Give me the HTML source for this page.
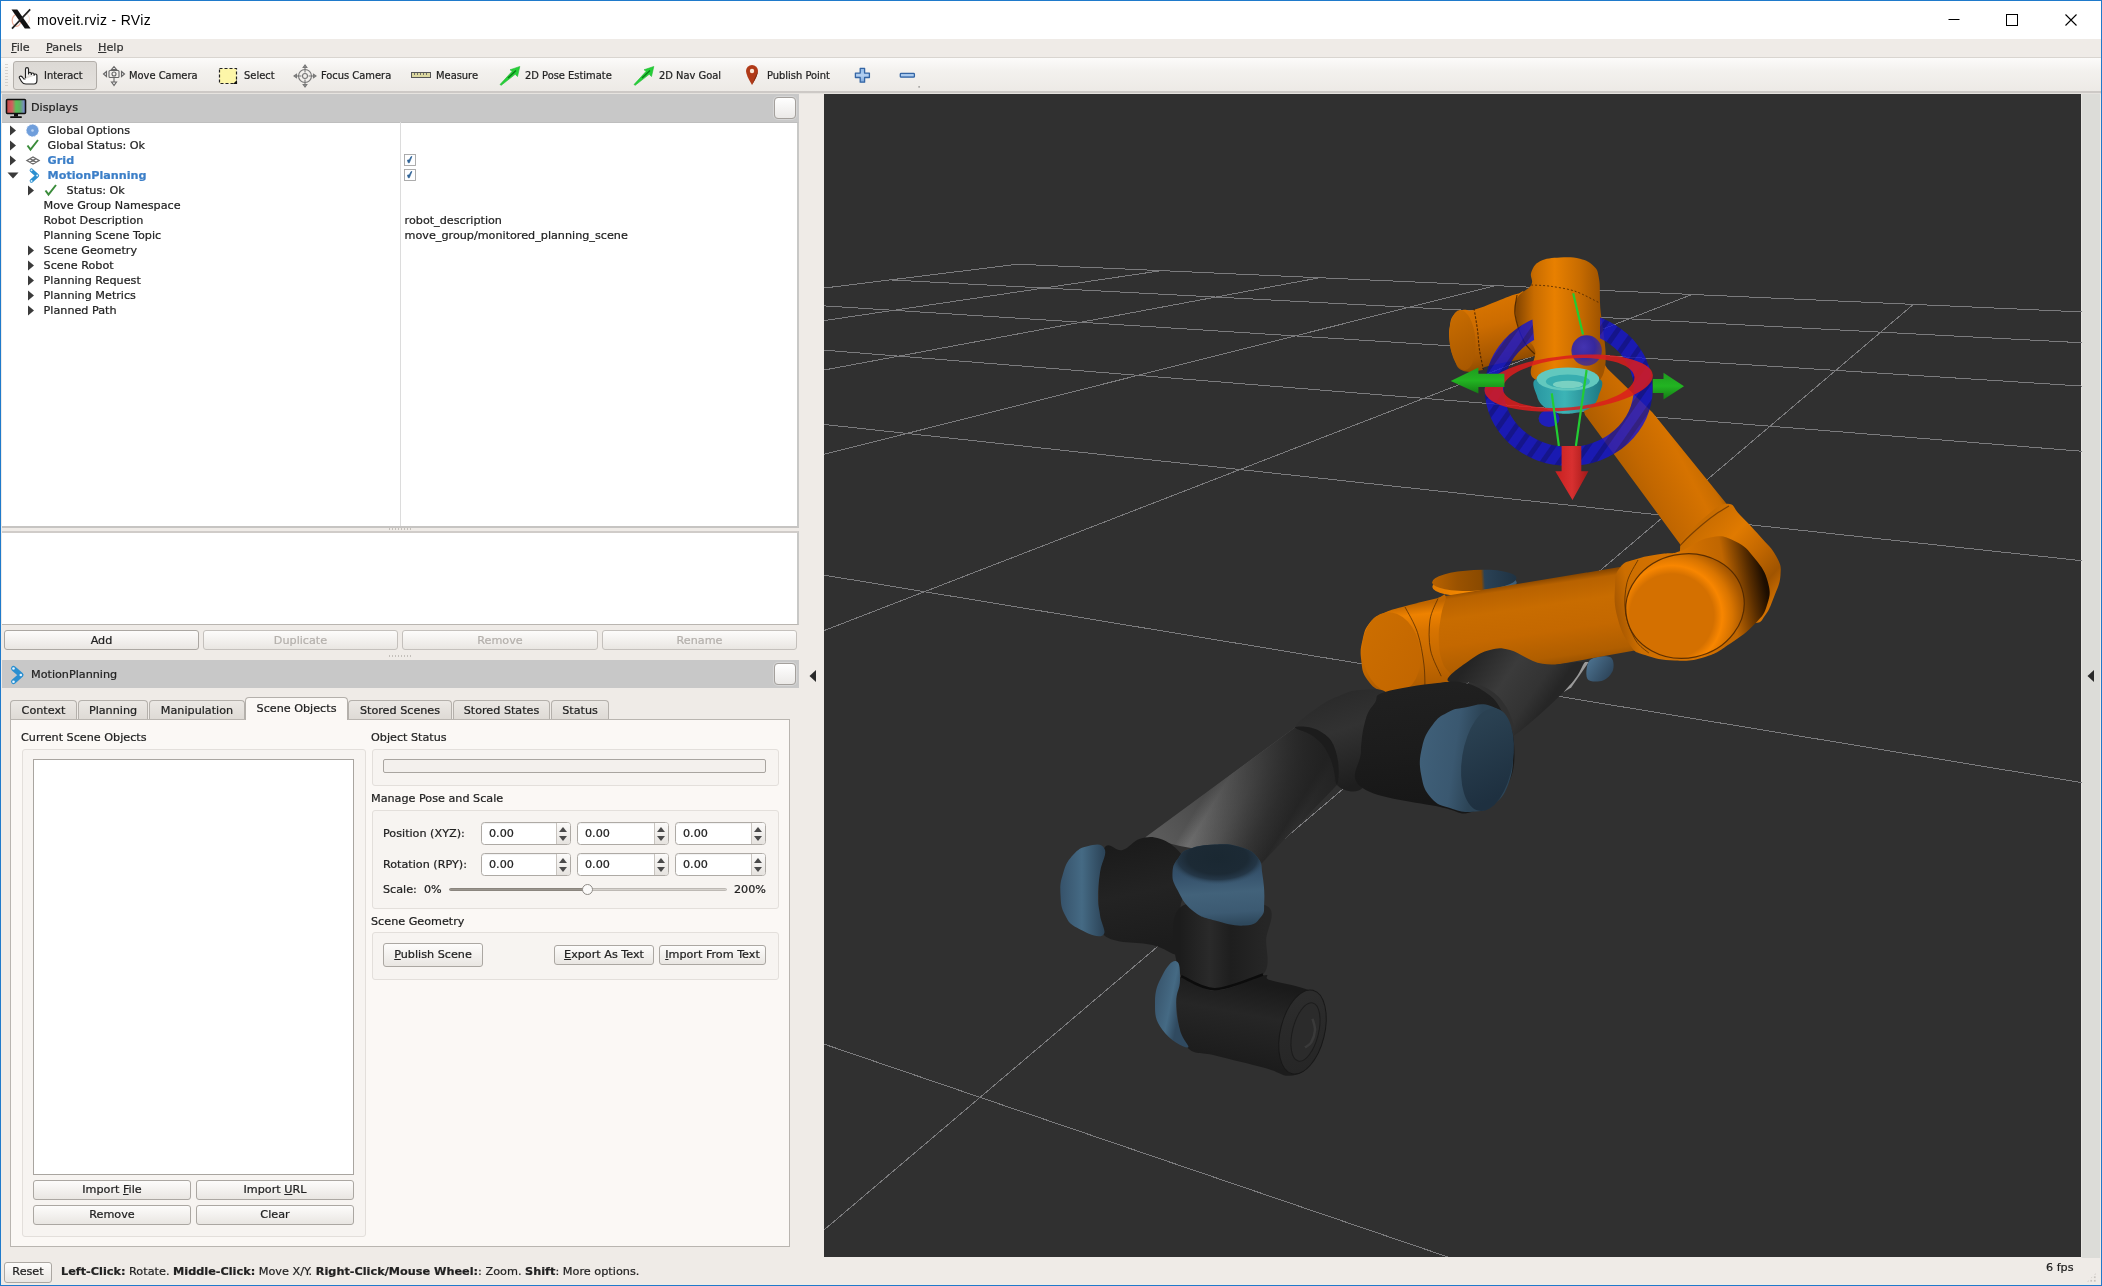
<!DOCTYPE html>
<html><head><meta charset="utf-8"><title>moveit.rviz - RViz</title>
<style>
html,body{margin:0;padding:0;}
body{width:2102px;height:1286px;overflow:hidden;background:#efebe7;font-family:"DejaVu Sans","Liberation Sans",sans-serif;font-size:11.2px;color:#222;-webkit-text-stroke-width:0.22px;position:relative;}
.abs{position:absolute;}
#win{position:absolute;left:0;top:0;width:2100px;height:1284px;border:1px solid #1f7acb;}
#title{position:absolute;left:1px;top:1px;width:2100px;height:38px;background:#fff;}
#title .t{position:absolute;left:36px;top:9.300px;font-family:"Liberation Sans",sans-serif;font-size:14px;letter-spacing:.31px;color:#000;line-height:20px;-webkit-text-stroke-width:0;}
#menu{position:absolute;left:1px;top:39px;width:2100px;height:19px;background:#efebe7;}
#menu span{position:absolute;top:1.800px;color:#333;line-height:14px;}
u{text-decoration:underline;text-underline-offset:1px;}
#tbar{position:absolute;left:1px;top:57px;width:2100px;background:linear-gradient(#fcfbfa,#f3f1ee 40%,#edeae6);border-top:1px solid #d9d5d0;border-bottom:2px solid #cdc9c6;height:36px;box-shadow:0 1px 0 #e6e3df;box-sizing:border-box;}
.tb{position:absolute;top:69px;font-family:"DejaVu Sans Condensed","DejaVu Sans",sans-serif;font-stretch:condensed;font-size:11px;line-height:13px;white-space:nowrap;}
.hdr{position:absolute;background:#c8c8c8;}
.hdr .lbl{position:absolute;left:29px;top:7px;line-height:13px;}
.fbtn{position:absolute;width:20px;height:20px;border:1px solid #a4a09c;border-radius:4px;background:linear-gradient(#fff,#ebe9e7);box-shadow:0 0 0 1px rgba(255,255,255,.25);}
.white{position:absolute;background:#fff;border:1px solid #b9b5b0;box-sizing:border-box;}
.row{position:absolute;left:0;height:15px;line-height:15px;white-space:nowrap;}
.btn{position:absolute;box-sizing:border-box;border:1px solid #aba7a2;border-radius:3px;background:linear-gradient(#fdfcfb,#e9e6e2);text-align:center;white-space:nowrap;}
.dis{color:#b4b0ac;border-color:#c4c0bc;}
.tab{position:absolute;box-sizing:border-box;border:1px solid #b4b0ab;border-bottom:none;border-radius:4px 4px 0 0;background:linear-gradient(#ebe8e4,#dedad5);text-align:center;white-space:nowrap;}
.grp{position:absolute;box-sizing:border-box;border:1px solid #e3dfdb;border-radius:3px;background:#f7f4f1;}
.spin{position:absolute;box-sizing:border-box;border:1px solid #aeaaa5;border-radius:3.500px;background:#fff;height:23px;box-shadow:inset 0 1px 1px rgba(0,0,0,.06);}
.spin span{position:absolute;left:7px;top:4px;line-height:13px;}

.cb{position:absolute;left:404px;width:11px;height:11px;box-sizing:border-box;border:1px solid #9aa4b0;border-radius:2px;background:#fff;}
.cb:after{content:"";position:absolute;left:3px;top:1px;width:2.5px;height:6px;background:#2a5aa0;transform:skewX(-20deg);}
.dots{position:absolute;width:22px;height:2px;background:repeating-linear-gradient(90deg,#c4c0bb 0 1px,transparent 1px 3px);}
.spin i{position:absolute;right:0;top:0;width:13px;height:21px;border-left:1px solid #c8c4bf;background:linear-gradient(#fbfaf9,#e6e3df);border-radius:0 2px 2px 0;}
.spin i:before{content:"";position:absolute;left:2px;top:4px;border:4.500px solid transparent;border-top:none;border-bottom:5px solid #4a4a4a;}
.spin i:after{content:"";position:absolute;left:2px;bottom:3.500px;border:4.500px solid transparent;border-bottom:none;border-top:5px solid #4a4a4a;}
</style></head><body><div id="root" style="position:absolute;left:0;top:0;width:2102px;height:1286px;will-change:transform;">
<div id="win"></div>
<div id="title"><span class="t">moveit.rviz - RViz</span></div>
<div id="menu"><span style="left:10px"><u>F</u>ile</span><span style="left:45px"><u>P</u>anels</span><span style="left:97px"><u>H</u>elp</span></div>
<div id="tbar"></div>
<!--TOOLBAR-->
<!-- title icon -->
<svg class="abs" style="left:9px;top:7px" width="24" height="24" viewBox="9 7 24 24">
 <ellipse cx="16.5" cy="20.500" rx="4.300" ry="5.800" fill="none" stroke="#e9967a" stroke-width="1.200" opacity=".75"/>
 <ellipse cx="26" cy="19" rx="3.500" ry="4.800" fill="none" stroke="#f0c8b0" stroke-width="1" opacity=".6"/>
 <path d="M11.5 9.5 L17.3 9.5 L30.6 28.5 L24.8 28.5 Z" fill="#111"/>
 <path d="M30.200 9.300 L12 28.600" stroke="#222" stroke-width="1.700"/>
</svg>
<!-- window controls -->
<svg class="abs" style="left:1940px;top:8px" width="150" height="24" viewBox="1940 8 150 24">
 <path d="M1948.5 19.5h11" stroke="#000" stroke-width="1"/>
 <rect x="2006.5" y="14.5" width="11" height="11" fill="none" stroke="#000" stroke-width="1"/>
 <path d="M2065.5 14.5l11 11M2076.5 14.5l-11 11" stroke="#000" stroke-width="1.1"/>
</svg>
<!-- toolbar -->
<div class="abs" style="left:5px;top:64px;width:3px;height:22px;background:repeating-linear-gradient(180deg,#c8c4bf 0 1px,transparent 1px 3px);opacity:.7"></div>
<div class="abs" style="left:13px;top:61px;width:84px;height:29px;box-sizing:border-box;border:1px solid #b4b0ab;border-radius:3px;background:linear-gradient(#dcd9d5,#e4e1dd);"></div>
<svg class="abs" style="left:17px;top:64px" width="24" height="24" viewBox="0 0 24 24">
 <path d="M8.5 14 V5.2 a1.5 1.5 0 0 1 3 0 V10.5 M11.5 10.5 V9.7 a1.4 1.4 0 0 1 2.8 0 V11 M14.3 11 V10.4 a1.4 1.4 0 0 1 2.8 0 V11.8 M17.1 11.8 V11.4 a1.4 1.4 0 0 1 2.8 0 V16.5 q0 3.5 -3 3.5 H9 q-3 0 -4.5 -2.5 L2.5 14 q-.6 -1.3 .6 -1.8 q1.2 -.4 2.2 .8 L6.8 15 H8.5" fill="#fff" stroke="#222" stroke-width="1.2" stroke-linejoin="round"/>
</svg>
<span class="tb" style="left:44px">Interact</span>
<svg class="abs" style="left:102px;top:64px" width="24" height="24" viewBox="0 0 24 24" fill="none" stroke="#666" stroke-width="1.1">
 <rect x="7" y="6.5" width="10" height="7" rx="1"/><circle cx="12" cy="10" r="2"/>
 <path d="M12 2.5l-2.5 3h5zM12 21.5l-2.5-3.5h5zM1.5 10l3-2.5v5zM22.5 10l-3-2.5v5z" fill="#eee"/><path d="M12 14v4"/>
</svg>
<span class="tb" style="left:129px">Move Camera</span>
<svg class="abs" style="left:216px;top:64px" width="24" height="24" viewBox="0 0 24 24">
 <rect x="3.5" y="4.500" width="17" height="15" fill="#fdf6a8" stroke="#222" stroke-width="1.2" stroke-dasharray="3 2"/>
 <path d="M21 20 L21 16 L17 20Z" fill="#111"/>
</svg>
<span class="tb" style="left:244px">Select</span>
<svg class="abs" style="left:293px;top:64px" width="24" height="24" viewBox="0 0 24 24" fill="none" stroke="#777" stroke-width="1.1">
 <circle cx="12" cy="12" r="6.5"/><circle cx="12" cy="12" r="2.5"/>
 <path d="M12 1.5v7M12 15.5v7M1.500 12h7M15.5 12h7"/>
 <path d="M12 1l-1.800 2.500h3.600zM12 23l-1.800-2.500h3.600zM1 12l2.500-1.800v3.600zM23 12l-2.500-1.800v3.600z" fill="#999"/>
</svg>
<span class="tb" style="left:321px">Focus Camera</span>
<svg class="abs" style="left:410px;top:64px" width="24" height="24" viewBox="0 0 24 24">
 <rect x="1.5" y="8.500" width="19" height="5" fill="#dcd8a0" stroke="#555" stroke-width="1"/>
 <path d="M4.500 8.500v2.500M7.500 8.500v2.500M10.500 8.500v2.500M13.500 8.500v2.500M16.500 8.500v2.500" stroke="#555" stroke-width=".8"/>
</svg>
<span class="tb" style="left:436px">Measure</span>
<svg class="abs" style="left:498px;top:64px" width="24" height="24" viewBox="0 0 24 24">
 <path d="M2 20.500 L14.200 7.300 L12 5.800 L21.800 2.500 L19.500 12.500 L17.200 10.300 L3.200 21.300 Z" fill="#25d038" stroke="#1fb82f" stroke-width=".6" stroke-linejoin="round"/>
 <path d="M10 14 L18 6.500" stroke="#0a7a18" stroke-width="1.300"/>
</svg>
<span class="tb" style="left:525px">2D Pose Estimate</span>
<svg class="abs" style="left:632px;top:64px" width="24" height="24" viewBox="0 0 24 24">
 <path d="M2 20.500 L14.200 7.300 L12 5.800 L21.800 2.500 L19.500 12.500 L17.200 10.300 L3.200 21.300 Z" fill="#25d038" stroke="#1fb82f" stroke-width=".6" stroke-linejoin="round"/>
 <path d="M10 14 L18 6.500" stroke="#0a7a18" stroke-width="1.300"/>
</svg>
<span class="tb" style="left:659px">2D Nav Goal</span>
<svg class="abs" style="left:741px;top:63px" width="24" height="24" viewBox="0 0 24 24">
 <path d="M11 22 Q5 12 5 8 A6 6 0 0 1 17 8 Q17 12 11 22Z" fill="#b03a18"/><path d="M11 22 Q14 14 17 8 Q17 12 11 22Z" fill="#7a2a10"/>
 <circle cx="11" cy="8" r="2.200" fill="#f8e8d8"/>
</svg>
<span class="tb" style="left:767px">Publish Point</span>
<svg class="abs" style="left:850px;top:64px" width="72" height="24" viewBox="850 64 72 24">
 <defs><linearGradient id="pm" x1="0" x2="0" y1="0" y2="1"><stop offset="0" stop-color="#8db8e8"/><stop offset=".5" stop-color="#b4d0f0"/><stop offset="1" stop-color="#7aa6dc"/></linearGradient></defs>
 <path d="M860.2 68.4h4.400v4.700h4.800v4.400h-4.800v4.700h-4.400v-4.700h-4.800v-4.400h4.800z" fill="url(#pm)" stroke="#3465a4" stroke-width="1.300" stroke-linejoin="round"/>
 <rect x="900.300" y="73.400" width="14.100" height="3.800" rx=".8" fill="url(#pm)" stroke="#3465a4" stroke-width="1.300"/>
 <rect x="918.500" y="86.300" width="1.200" height="1.200" fill="#666"/>
</svg>
<!--LEFT-->
<!-- Displays header -->
<div class="hdr" style="left:2px;top:94px;width:797px;height:28px;"><span class="lbl">Displays</span></div>
<svg class="abs" style="left:5px;top:98px" width="24" height="24" viewBox="0 0 24 24">
 <defs><linearGradient id="mon" x1="0" x2="1" y1="0" y2="0"><stop offset="0" stop-color="#c84848"/><stop offset=".3" stop-color="#d06060"/><stop offset=".5" stop-color="#58c058"/><stop offset=".7" stop-color="#60b060"/><stop offset="1" stop-color="#8080e8"/></linearGradient></defs>
 <rect x="1.5" y="1.5" width="19" height="14" rx="1" fill="url(#mon)" stroke="#111" stroke-width="1.6"/>
 <rect x="9" y="16" width="4" height="2.5" fill="#111"/><rect x="5" y="18.2" width="12" height="1.8" rx=".9" fill="#111"/>
</svg>
<div class="fbtn" style="left:774px;top:97px"></div>
<!-- tree -->
<div class="white" style="left:2px;top:122px;width:797px;height:406px;border-top:1px solid #bebebe;border-left:none;border-bottom:2px solid #c6c4c2;border-right:2px solid #c8c8c6"></div>
<div class="abs" style="left:400px;top:122px;width:1px;height:404px;background:#dcdcdc;"></div>
<div id="tree" class="abs" style="left:.6px;top:122.550px;width:798px;height:404px;">
 <svg class="abs" style="left:0;top:0" width="60" height="200" viewBox="0 0 60 200">
  <g fill="#3a3a3a">
   <path d="M9 2.5 L15 7.5 L9 12.5Z"/><path d="M9 17.5 L15 22.5 L9 27.5Z"/><path d="M9 32.5 L15 37.5 L9 42.5Z"/>
   <path d="M6.5 49.5 L17.5 49.5 L12 55.5Z"/>
   <path d="M27 62.5 L33 67.5 L27 72.5Z"/>
   <path d="M27 122.5 L33 127.5 L27 132.5Z"/><path d="M27 137.5 L33 142.5 L27 147.5Z"/><path d="M27 152.5 L33 157.5 L27 162.5Z"/><path d="M27 167.5 L33 172.5 L27 177.5Z"/><path d="M27 182.5 L33 187.5 L27 192.5Z"/>
  </g>
  <!-- global options icon -->
  <circle cx="31.5" cy="7.5" r="6" fill="#6f9edb"/><circle cx="31.5" cy="7.5" r="6" fill="none" stroke="#9fc0ea" stroke-width="1" stroke-dasharray="1.5 1.5"/><circle cx="31.5" cy="7.5" r="1.3" fill="#b8d2f2"/>
  <!-- checks -->
  <path d="M26.5 22.5 L29.5 26.5 L37 17" fill="none" stroke="#3b8c3b" stroke-width="2"/>
  <path d="M44.5 67.5 L47.5 71.5 L55 62" fill="none" stroke="#3b8c3b" stroke-width="2"/>
  <!-- grid icon -->
  <path d="M26 37.5 L32 34 L38 37.5 L32 41Z M29 35.7 L35 39.3 M35 35.7 L29 39.3" fill="none" stroke="#6a6a6a" stroke-width="1.400"/>
  <!-- MP icon -->
  <path d="M30.5 47.3 L36.3 52.6 L30.5 57.900" fill="none" stroke="#2a8fd0" stroke-width="3.700" stroke-linejoin="round" stroke-linecap="round"/>
  <circle cx="30.5" cy="47.3" r="1" fill="#d8f0ff"/><circle cx="36.2" cy="52.6" r="1" fill="#d8f0ff"/><circle cx="30.5" cy="57.900" r="1" fill="#d8f0ff"/>
 </svg>
 <div class="row" style="top:0;left:47px">Global Options</div>
 <div class="row" style="top:15px;left:47px">Global Status: Ok</div>
 <div class="row" style="top:30px;left:47px;font-weight:bold;color:#3c7fc8">Grid</div>
 <div class="row" style="top:45px;left:47px;font-weight:bold;color:#3c7fc8">MotionPlanning</div>
 <div class="row" style="top:60px;left:66px">Status: Ok</div>
 <div class="row" style="top:75px;left:43px">Move Group Namespace</div>
 <div class="row" style="top:90px;left:43px">Robot Description</div>
 <div class="row" style="top:105px;left:43px">Planning Scene Topic</div>
 <div class="row" style="top:120px;left:43px">Scene Geometry</div>
 <div class="row" style="top:135px;left:43px">Scene Robot</div>
 <div class="row" style="top:150px;left:43px">Planning Request</div>
 <div class="row" style="top:165px;left:43px">Planning Metrics</div>
 <div class="row" style="top:180px;left:43px">Planned Path</div>
 <div class="row" style="top:90px;left:404px">robot_description</div>
 <div class="row" style="top:105px;left:404px">move_group/monitored_planning_scene</div>
 <svg class="abs" style="left:403.800px;top:31.600px" width="12" height="12" viewBox="0 0 12 12"><rect x=".5" y=".5" width="11" height="11" fill="#fdfeff" stroke="#a4a4a4" stroke-width=".9"/><path d="M3.400 6.200 L4.300 8.800 L5.300 8.800 L7.900 2.600 L7.100 2.500 L5.300 5.800 Z" fill="#2f6396" stroke="#2f6396" stroke-width=".7" stroke-linejoin="round"/></svg><svg class="abs" style="left:403.800px;top:46.600px" width="12" height="12" viewBox="0 0 12 12"><rect x=".5" y=".5" width="11" height="11" fill="#fdfeff" stroke="#a4a4a4" stroke-width=".9"/><path d="M3.400 6.200 L4.300 8.800 L5.300 8.800 L7.900 2.600 L7.100 2.500 L5.300 5.800 Z" fill="#2f6396" stroke="#2f6396" stroke-width=".7" stroke-linejoin="round"/></svg>
</div>
<!-- splitter dots -->
<div class="dots" style="left:389px;top:528px"></div>
<div class="white" style="left:2px;top:531px;width:797px;height:94px;border-left:none;border-top:2px solid #d0ccc9;border-right:2px solid #c8c8c6"></div>
<div class="btn" style="left:4px;top:630px;width:195px;height:20px;line-height:19px">Add</div>
<div class="btn dis" style="left:203px;top:630px;width:195px;height:20px;line-height:19px">Duplicate</div>
<div class="btn dis" style="left:402px;top:630px;width:196px;height:20px;line-height:19px">Remove</div>
<div class="btn dis" style="left:602px;top:630px;width:195px;height:20px;line-height:19px">Rename</div>
<div class="dots" style="left:389px;top:655px"></div>
<!-- MotionPlanning panel -->
<div class="hdr" style="left:2px;top:660px;width:797px;height:28px;"><span class="lbl" style="top:8px">MotionPlanning</span></div>
<svg class="abs" style="left:8px;top:664px" width="18" height="22" viewBox="0 0 18 22">
 <path d="M5.500 4.500 L13 11 L5.500 17.700" fill="none" stroke="#2a8fd0" stroke-width="5" stroke-linejoin="round" stroke-linecap="round"/>
 <circle cx="5.500" cy="4.500" r="1.300" fill="#e4f4ff"/><circle cx="12.800" cy="11" r="1.300" fill="#e4f4ff"/><circle cx="5.500" cy="17.700" r="1.300" fill="#e4f4ff"/>
</svg>
<div class="fbtn" style="left:774px;top:663px"></div>
<!-- tab pane -->
<div class="abs" style="left:10px;top:719px;width:780px;height:528px;box-sizing:border-box;border:1px solid #b9b5b0;background:#fbf8f5;"></div>
<div class="tab" style="left:10px;top:700px;width:67px;height:19px;line-height:19px">Context</div>
<div class="tab" style="left:78px;top:700px;width:70px;height:19px;line-height:19px">Planning</div>
<div class="tab" style="left:149px;top:700px;width:96px;height:19px;line-height:19px">Manipulation</div>
<div class="tab" style="left:348px;top:700px;width:104px;height:19px;line-height:19px">Stored Scenes</div>
<div class="tab" style="left:453px;top:700px;width:97px;height:19px;line-height:19px">Stored States</div>
<div class="tab" style="left:551px;top:700px;width:58px;height:19px;line-height:19px">Status</div>
<div class="tab" style="left:245px;top:697px;width:103px;height:23px;line-height:22px;background:#fbf8f5;">Scene Objects</div>
<!-- left group -->
<div class="abs" style="left:21px;top:731px;line-height:14px">Current Scene Objects</div>
<div class="grp" style="left:22px;top:749px;width:344px;height:488px"></div>
<div class="white" style="left:33px;top:759px;width:321px;height:416px;border-color:#a9a5a0"></div>
<div class="btn" style="left:33px;top:1180px;width:158px;height:20px;line-height:18px">Import <u>F</u>ile</div>
<div class="btn" style="left:196px;top:1180px;width:158px;height:20px;line-height:18px">Import <u>U</u>RL</div>
<div class="btn" style="left:33px;top:1205px;width:158px;height:20px;line-height:18px">Remove</div>
<div class="btn" style="left:196px;top:1205px;width:158px;height:20px;line-height:18px">Clear</div>
<!-- right groups -->
<div class="abs" style="left:371px;top:731px;line-height:14px">Object Status</div>
<div class="grp" style="left:372px;top:749px;width:407px;height:37px"></div>
<div class="abs" style="left:383px;top:759px;width:383px;height:14px;box-sizing:border-box;border:1px solid #a9a5a0;border-radius:2px;background:#f3f0ed"></div>
<div class="abs" style="left:371px;top:792px;line-height:14px">Manage Pose and Scale</div>
<div class="grp" style="left:372px;top:810px;width:407px;height:99px"></div>
<div class="abs" style="left:383px;top:827px;line-height:14px">Position (XYZ):</div>
<div class="abs" style="left:383px;top:858px;line-height:14px">Rotation (RPY):</div>
<div class="abs" style="left:383px;top:883px;line-height:14px">Scale:&nbsp; 0%</div>
<div class="abs" style="left:734px;top:883px;line-height:14px">200%</div>
<div class="spin" style="left:481px;top:822px;width:90px"><span>0.00</span><i></i></div>
<div class="spin" style="left:577px;top:822px;width:92px"><span>0.00</span><i></i></div>
<div class="spin" style="left:675px;top:822px;width:91px"><span>0.00</span><i></i></div>
<div class="spin" style="left:481px;top:853px;width:90px"><span>0.00</span><i></i></div>
<div class="spin" style="left:577px;top:853px;width:92px"><span>0.00</span><i></i></div>
<div class="spin" style="left:675px;top:853px;width:91px"><span>0.00</span><i></i></div>
<div class="abs" style="left:449px;top:888px;width:139px;height:3px;border-radius:2px;background:#9a958e;border:1px solid #8a857e;box-sizing:border-box"></div>
<div class="abs" style="left:588px;top:888px;width:139px;height:3px;border-radius:2px;background:#d6d2cd;border:1px solid #bdb9b4;box-sizing:border-box"></div>
<div class="abs" style="left:582px;top:884px;width:11px;height:11px;border-radius:6px;box-sizing:border-box;border:1px solid #8f8b86;background:#fbfaf9"></div>
<div class="abs" style="left:371px;top:915px;line-height:14px">Scene Geometry</div>
<div class="grp" style="left:372px;top:932px;width:407px;height:48px"></div>
<div class="btn" style="left:383px;top:943px;width:100px;height:24px;line-height:22px"><u>P</u>ublish Scene</div>
<div class="btn" style="left:554px;top:945px;width:100px;height:20px;line-height:18px"><u>E</u>xport As Text</div>
<div class="btn" style="left:659px;top:945px;width:107px;height:20px;line-height:18px"><u>I</u>mport From Text</div>
<!--VIEW-->
<div class="abs" style="left:2081px;top:94px;width:19px;height:1164px;background:#dcdcd8;border-left:1px solid #e8e6e2;box-sizing:border-box"></div>
<svg class="abs" style="left:824px;top:94px" width="1257.5" height="1163" viewBox="824 94 1257.5 1163">
<rect x="823" y="94" width="1258" height="1163" fill="#303030"/>
<path d="M1017.9 264.2L-25439.2 3518.4M1017.9 264.2L3627.4 381.3M1161.1 270.7L-20714.7 3509.4M890.2 279.9L4001.2 444.0M1319.4 277.8L-15990.2 3500.4M728.9 299.8L4621.8 548.0M1495.3 285.6L-11265.7 3491.5M519.0 325.6L5853.5 754.5M1692.0 294.5L-6541.2 3482.5M234.5 360.6L9474.8 1361.6M1913.4 304.4L-1816.7 3473.5M-172.9 410.7L18166.0 3435.6M2164.4 315.7L2907.8 3464.6M-804.8 488.4L7890.8 3455.1M2451.5 328.5L7632.3 3455.6M-1917.4 625.3L-2384.4 3474.6M2782.9 343.4L12356.8 3446.7M-4396.2 930.1L-12659.6 3494.1M3169.7 360.8L17081.3 3437.7M-14758.1 2204.6L-22934.8 3513.6M3627.4 381.3L21805.8 3428.7" fill="none" stroke="#7b7b7d" stroke-width="1" shape-rendering="crispEdges"/>
<defs><linearGradient id="g1" gradientUnits="userSpaceOnUse" x1="1470.0" y1="660.0" x2="1542.5" y2="710.0"><stop offset="0" stop-color="#242424"/><stop offset="0.45" stop-color="#3b3b3b"/><stop offset="0.8" stop-color="#333333"/><stop offset="1" stop-color="#262626"/></linearGradient><linearGradient id="g2" gradientUnits="userSpaceOnUse" x1="1590.0" y1="660.0" x2="1612.5" y2="675.0"><stop offset="0" stop-color="#4a6f8c"/><stop offset="1" stop-color="#2c4358"/></linearGradient><linearGradient id="discside" gradientUnits="userSpaceOnUse" x1="1432" y1="0" x2="1517" y2="0"><stop offset="0" stop-color="#e07a00"/><stop offset=".35" stop-color="#f48800"/><stop offset=".61" stop-color="#f08400"/><stop offset=".63" stop-color="#5a88aa"/><stop offset="1" stop-color="#3a5a74"/></linearGradient><linearGradient id="disctop" gradientUnits="userSpaceOnUse" x1="1432" y1="0" x2="1517" y2="0"><stop offset="0" stop-color="#b86200"/><stop offset=".3" stop-color="#9a5200"/><stop offset=".58" stop-color="#8a4a00"/><stop offset=".62" stop-color="#2a4256"/><stop offset="1" stop-color="#1f3242"/></linearGradient><linearGradient id="g3" gradientUnits="userSpaceOnUse" x1="1600.0" y1="490.0" x2="1695.0" y2="440.0"><stop offset="0" stop-color="#6e3a00"/><stop offset="0.12" stop-color="#a85a00"/><stop offset="0.45" stop-color="#c26700"/><stop offset="0.8" stop-color="#d67300"/><stop offset="0.94" stop-color="#c86c00"/><stop offset="1" stop-color="#a85a00"/></linearGradient><linearGradient id="g4" gradientUnits="userSpaceOnUse" x1="1530.0" y1="581.2" x2="1542.5" y2="667.5"><stop offset="0" stop-color="#8a4800"/><stop offset="0.07" stop-color="#b86200"/><stop offset="0.3" stop-color="#c86c00"/><stop offset="0.6" stop-color="#c46800"/><stop offset="0.9" stop-color="#b05e00"/><stop offset="1" stop-color="#9a5200"/></linearGradient><linearGradient id="g5" gradientUnits="userSpaceOnUse" x1="1405.0" y1="605.0" x2="1415.0" y2="695.0"><stop offset="0" stop-color="#c06600"/><stop offset="0.12" stop-color="#ee8200"/><stop offset="0.3" stop-color="#d87400"/><stop offset="0.7" stop-color="#c06600"/><stop offset="1" stop-color="#a85800"/></linearGradient><linearGradient id="g6" gradientUnits="userSpaceOnUse" x1="1362.5" y1="625.0" x2="1422.5" y2="680.0"><stop offset="0" stop-color="#cc6e00"/><stop offset="1" stop-color="#c26600"/></linearGradient><linearGradient id="g7" gradientUnits="userSpaceOnUse" x1="1692.5" y1="532.5" x2="1775.0" y2="605.0"><stop offset="0" stop-color="#c86c00"/><stop offset="0.3" stop-color="#e07a00"/><stop offset="0.55" stop-color="#c46800"/><stop offset="0.8" stop-color="#a05400"/><stop offset="1" stop-color="#d87400"/></linearGradient><linearGradient id="g8" gradientUnits="userSpaceOnUse" x1="1615.0" y1="605.0" x2="1771.2" y2="575.0"><stop offset="0" stop-color="#a85800"/><stop offset="0.1" stop-color="#cc6e00"/><stop offset="0.45" stop-color="#d87400"/><stop offset="0.72" stop-color="#c06600"/><stop offset="0.86" stop-color="#5a2e00"/><stop offset="0.95" stop-color="#1e0e00"/><stop offset="1" stop-color="#140800"/></linearGradient><radialGradient id="g9" gradientUnits="userSpaceOnUse" cx="1670.0" cy="613.0" r="84.0"><stop offset="0" stop-color="#d47000"/><stop offset="0.5" stop-color="#d47000"/><stop offset="0.6" stop-color="#f88600"/><stop offset="0.72" stop-color="#d87400"/><stop offset="0.85" stop-color="#a85800"/><stop offset="1" stop-color="#8a4600"/></radialGradient><linearGradient id="g10" gradientUnits="userSpaceOnUse" x1="1482.5" y1="302.5" x2="1500.0" y2="367.5"><stop offset="0" stop-color="#d87400"/><stop offset="0.35" stop-color="#cc6c00"/><stop offset="0.8" stop-color="#a85800"/><stop offset="1" stop-color="#8a4800"/></linearGradient><linearGradient id="g11" gradientUnits="userSpaceOnUse" x1="1450.0" y1="315.0" x2="1475.0" y2="365.0"><stop offset="0" stop-color="#c86c00"/><stop offset="1" stop-color="#a85800"/></linearGradient><linearGradient id="g12" gradientUnits="userSpaceOnUse" x1="1517.5" y1="240.0" x2="1600.0" y2="240.0"><stop offset="0" stop-color="#8a4800"/><stop offset="0.2" stop-color="#c86c00"/><stop offset="0.45" stop-color="#e88000"/><stop offset="0.75" stop-color="#c86c00"/><stop offset="1" stop-color="#a05400"/></linearGradient><linearGradient id="g13" gradientUnits="userSpaceOnUse" x1="1536.0" y1="0.0" x2="1600.0" y2="0.0"><stop offset="0" stop-color="#2a98a2"/><stop offset="0.45" stop-color="#3cb4b6"/><stop offset="1" stop-color="#1f7c86"/></linearGradient><linearGradient id="g14" gradientUnits="userSpaceOnUse" x1="1215.0" y1="778.0" x2="1300.0" y2="830.0"><stop offset="0" stop-color="#5a5a5a"/><stop offset="0.12" stop-color="#747474"/><stop offset="0.35" stop-color="#606060"/><stop offset="0.65" stop-color="#3c3c3c"/><stop offset="0.85" stop-color="#2a2a2a"/><stop offset="0.94" stop-color="#3a3a3a"/><stop offset="1" stop-color="#383838"/></linearGradient><linearGradient id="g15" gradientUnits="userSpaceOnUse" x1="1170.0" y1="850.0" x2="1320.0" y2="740.0"><stop offset="0" stop-color="rgba(30,30,30,0)"/><stop offset="0.5" stop-color="rgba(34,34,34,.45)"/><stop offset="1" stop-color="rgba(32,32,32,.9)"/></linearGradient><linearGradient id="g16" gradientUnits="userSpaceOnUse" x1="1325.0" y1="695.0" x2="1355.0" y2="785.0"><stop offset="0" stop-color="#2a2a2a"/><stop offset="0.4" stop-color="#323232"/><stop offset="1" stop-color="#1e1e1e"/></linearGradient><linearGradient id="g17" gradientUnits="userSpaceOnUse" x1="1400.0" y1="690.0" x2="1412.5" y2="802.5"><stop offset="0" stop-color="#202020"/><stop offset="0.5" stop-color="#1c1c1c"/><stop offset="1" stop-color="#171717"/></linearGradient><linearGradient id="g18" gradientUnits="userSpaceOnUse" x1="1422.5" y1="752.5" x2="1475.0" y2="760.0"><stop offset="0" stop-color="#3f5f78"/><stop offset="0.6" stop-color="#3a5870"/><stop offset="1" stop-color="#2c4456"/></linearGradient><linearGradient id="g19" gradientUnits="userSpaceOnUse" x1="1465.0" y1="727.5" x2="1510.0" y2="790.0"><stop offset="0" stop-color="#2a4152"/><stop offset="1" stop-color="#1e3040"/></linearGradient><linearGradient id="g20" gradientUnits="userSpaceOnUse" x1="1115.0" y1="840.0" x2="1140.0" y2="950.0"><stop offset="0" stop-color="#1a1a1a"/><stop offset="0.5" stop-color="#232323"/><stop offset="1" stop-color="#1c1c1c"/></linearGradient><linearGradient id="g21" gradientUnits="userSpaceOnUse" x1="1060.0" y1="890.0" x2="1103.8" y2="890.0"><stop offset="0" stop-color="#36526a"/><stop offset="0.5" stop-color="#456a84"/><stop offset="1" stop-color="#2c4458"/></linearGradient><linearGradient id="g22" gradientUnits="userSpaceOnUse" x1="1180.0" y1="790.0" x2="1265.0" y2="790.0"><stop offset="0" stop-color="#1c1c1c"/><stop offset="0.35" stop-color="#2a2a2a"/><stop offset="0.6" stop-color="#1e1e1e"/><stop offset="1" stop-color="#262626"/></linearGradient><linearGradient id="g23" gradientUnits="userSpaceOnUse" x1="1240.0" y1="980.0" x2="1225.0" y2="1060.0"><stop offset="0" stop-color="#1a1a1a"/><stop offset="0.4" stop-color="#262626"/><stop offset="1" stop-color="#1c1c1c"/></linearGradient><linearGradient id="g24" gradientUnits="userSpaceOnUse" x1="1285.0" y1="1002.5" x2="1320.0" y2="1065.0"><stop offset="0" stop-color="#2c2c2c"/><stop offset="1" stop-color="#262626"/></linearGradient><linearGradient id="g25" gradientUnits="userSpaceOnUse" x1="1155.0" y1="1002.5" x2="1180.0" y2="1007.5"><stop offset="0" stop-color="#3a5870"/><stop offset="0.6" stop-color="#456a84"/><stop offset="1" stop-color="#304a60"/></linearGradient><linearGradient id="g26" gradientUnits="userSpaceOnUse" x1="1215.0" y1="845.0" x2="1220.0" y2="925.0"><stop offset="0" stop-color="#2a4052"/><stop offset="0.35" stop-color="#34506a"/><stop offset="0.6" stop-color="#42627a"/><stop offset="0.85" stop-color="#3c5a72"/><stop offset="1" stop-color="#2e485c"/></linearGradient><clipPath id="capC"><path d="M1190.0 848.8C1198.5 845.7 1203.3 844.9 1215.0 844.5C1226.7 844.1 1230.1 844.0 1240.0 847.0C1249.9 850.0 1252.2 851.0 1257.5 857.5C1262.8 864.0 1260.9 864.5 1262.5 875.0C1264.1 885.5 1264.7 892.6 1264.2 902.5C1263.8 912.4 1265.0 912.1 1260.5 917.5C1256.0 922.9 1255.6 924.8 1245.0 925.5C1234.4 926.2 1227.2 924.0 1215.0 920.5C1202.8 917.0 1201.2 917.6 1192.5 910.5C1183.8 903.4 1182.2 898.9 1177.5 890.0C1172.8 881.1 1172.2 880.1 1172.5 872.5C1172.8 864.9 1174.7 863.0 1178.8 857.5C1182.8 852.0 1181.5 851.8 1190.0 848.8Z"/></clipPath><radialGradient id="g27" gradientUnits="userSpaceOnUse" cx="1217.5" cy="858.0" r="50.0" gradientTransform="translate(1217.5 858.0) scale(1 0.540) translate(-1217.5 -858.0)"><stop offset="0" stop-color="#1a2832"/><stop offset="0.6" stop-color="#1c2a35"/><stop offset="0.8" stop-color="rgba(32,48,62,.8)"/><stop offset="1" stop-color="rgba(56,86,110,0)"/></radialGradient><clipPath id="ringclip"><path d="M1400 240H1925V561H1400Z M1531.2 305.0 L1600.0 305.0 L1600.0 360.0 L1535.0 350.0Z" clip-rule="evenodd"/></clipPath><pattern id="stripes" width="14" height="14" patternUnits="userSpaceOnUse" patternTransform="rotate(35)"><rect width="14" height="14" fill="#1414d2"/><rect width="5" height="14" fill="#0e0ea0"/></pattern><radialGradient id="g28" gradientUnits="userSpaceOnUse" cx="1584.0" cy="347.0" r="16.0"><stop offset="0" stop-color="#2828d8"/><stop offset="0.7" stop-color="#1c1cc0"/><stop offset="1" stop-color="#3a2a9a"/></radialGradient><linearGradient id="g29" gradientUnits="userSpaceOnUse" x1="0.0" y1="367.0" x2="0.0" y2="394.0"><stop offset="0" stop-color="#1f9a1f"/><stop offset="0.5" stop-color="#22b422"/><stop offset="1" stop-color="#157a15"/></linearGradient><linearGradient id="g30" gradientUnits="userSpaceOnUse" x1="0.0" y1="372.0" x2="0.0" y2="400.0"><stop offset="0" stop-color="#1f9a1f"/><stop offset="0.5" stop-color="#22b422"/><stop offset="1" stop-color="#157a15"/></linearGradient><linearGradient id="g31" gradientUnits="userSpaceOnUse" x1="1555.0" y1="0.0" x2="1589.0" y2="0.0"><stop offset="0" stop-color="#c82020"/><stop offset="0.5" stop-color="#d83030"/><stop offset="1" stop-color="#a01818"/></linearGradient></defs>
<path d="M1580.0 662.0L1588.8 662.0L1571.2 687.5L1563.8 692.0Z" fill="#9a9a9a" />
<path d="M1590.0 660.0C1593.8 656.3 1606.2 655.3 1610.0 657.0C1613.8 658.7 1614.2 666.1 1613.0 670.0C1611.8 673.9 1607.2 679.0 1603.0 680.5C1598.8 682.0 1589.7 682.4 1587.5 679.0C1585.3 675.6 1586.2 663.7 1590.0 660.0Z" fill="url(#g2)" />
<ellipse cx="1474.3" cy="584.8" rx="42.3" ry="11" transform="rotate(-3 1474.3 580.3)" fill="url(#discside)"/>
<ellipse cx="1474.3" cy="580.3" rx="42.3" ry="10.400" transform="rotate(-3 1474.3 580.3)" fill="url(#disctop)"/>
<path d="M1575.0 380.0L1600.0 357.5L1607.5 368.8L1652.5 412.5L1727.5 505.0L1775.0 562.5L1695.0 562.5L1682.5 547.5L1585.0 415.0Z" fill="url(#g3)" />
<path d="M1437.5 598.0L1445.0 596.0L1620.0 567.0L1637.5 650.0L1437.5 686.2Z" fill="url(#g4)" />
<path d="M1362.5 640.0C1364.5 631.2 1364.8 628.9 1370.0 622.5C1375.2 616.1 1376.8 616.3 1385.0 612.5C1393.2 608.7 1393.3 609.5 1405.0 606.2C1416.7 603.0 1425.5 601.1 1435.0 598.8C1444.5 596.4 1444.0 592.2 1445.5 596.0C1447.0 599.8 1442.8 604.7 1441.2 615.0C1439.7 625.3 1438.5 628.9 1438.8 640.0C1439.0 651.1 1439.6 653.0 1442.5 662.5C1445.4 672.0 1455.3 673.4 1451.2 680.5C1447.2 687.6 1434.0 689.7 1425.0 693.0C1416.0 696.3 1421.8 694.7 1412.5 694.5C1403.2 694.3 1395.5 695.4 1385.0 692.0C1374.5 688.6 1373.0 687.5 1367.5 680.0C1362.0 672.5 1362.4 669.3 1361.2 660.0C1360.1 650.7 1360.5 648.8 1362.5 640.0Z" fill="url(#g5)" />
<ellipse cx="1391.5" cy="653.0" rx="29.0" ry="41.0" transform="rotate(-8.0 1391.5 653.0)" fill="url(#g6)" />
<path d="M1405.0 607.0C1407.1 611.2 1414.3 622.8 1417.5 632.5C1420.7 642.2 1422.8 654.9 1424.0 665.0C1425.2 675.1 1424.8 688.3 1425.0 693.0" fill="none" stroke="#5a2e00" stroke-width="1" opacity=".8"/>
<path d="M1438.0 598.5C1436.7 602.1 1431.2 611.4 1430.0 620.0C1428.8 628.6 1428.6 640.6 1430.5 650.0C1432.4 659.4 1439.5 671.9 1441.2 676.2" fill="none" stroke="#5a2e00" stroke-width="1" opacity=".8"/>
<path d="M1680.0 550.0C1681.2 535.4 1678.6 545.7 1685.0 537.5C1691.4 529.3 1697.6 522.9 1707.5 515.0C1717.4 507.1 1719.9 503.8 1727.5 503.8C1735.1 503.8 1732.4 507.4 1740.0 515.0C1747.6 522.6 1751.5 526.6 1760.0 536.2C1768.5 545.9 1771.5 547.2 1776.2 556.2C1781.0 565.3 1781.1 565.4 1780.5 575.0C1779.9 584.6 1777.4 588.0 1773.8 597.5C1770.1 607.0 1769.4 609.5 1765.0 615.5C1760.6 621.5 1762.0 622.5 1755.0 623.0C1748.0 623.5 1752.5 622.9 1735.0 617.5C1717.5 612.1 1692.8 615.8 1680.0 600.0C1667.2 584.2 1678.8 564.6 1680.0 550.0Z" fill="url(#g7)" />
<path d="M1680.0 545.5C1681.7 543.8 1686.2 539.1 1690.0 535.5C1693.8 531.9 1698.7 527.6 1703.0 524.0C1707.3 520.4 1711.7 517.0 1716.0 514.0C1720.3 511.0 1726.8 507.3 1729.0 506.0" fill="none" stroke="#6a3600" stroke-width="1.2" opacity=".8"/>
<path d="M1620.0 567.5C1625.2 560.8 1627.6 562.0 1637.5 558.8C1647.4 555.5 1652.6 555.5 1662.5 553.8C1672.4 552.0 1668.9 555.0 1680.0 551.2C1691.1 547.5 1697.2 539.8 1710.0 537.5C1722.8 535.2 1724.5 536.3 1735.0 541.2C1745.5 546.2 1747.3 549.1 1755.0 558.8C1762.7 568.4 1765.2 571.7 1768.0 582.5C1770.8 593.3 1770.0 595.4 1767.0 605.0C1764.0 614.6 1763.6 614.7 1755.0 623.8C1746.4 632.8 1741.7 636.0 1730.0 643.8C1718.3 651.5 1717.8 653.1 1705.0 657.0C1692.2 660.9 1689.0 661.0 1675.0 660.5C1661.0 660.0 1655.5 658.6 1645.0 655.0C1634.5 651.4 1636.4 653.8 1630.0 645.0C1623.6 636.2 1621.0 630.9 1617.5 617.5C1614.0 604.1 1614.4 599.2 1615.0 587.5C1615.6 575.8 1614.8 574.2 1620.0 567.5Z" fill="url(#g8)" />
<path d="M1638.0 560.0C1636.2 563.8 1629.1 573.8 1627.0 582.5C1624.9 591.2 1624.1 602.9 1625.5 612.5C1626.9 622.1 1631.6 633.2 1635.5 640.0C1639.4 646.8 1646.5 650.8 1648.8 653.0" fill="none" stroke="#5a2e00" stroke-width="1" opacity=".8"/>
<ellipse cx="1685.0" cy="606.0" rx="59.5" ry="52.0" transform="rotate(-12.0 1685.0 606.0)" fill="url(#g9)" />
<ellipse cx="1685.0" cy="606.0" rx="59.5" ry="52" transform="rotate(-12 1685.0 606.0)" fill="none" stroke="#4a2400" stroke-width="1.2" opacity=".85"/>
<path d="M1450.0 325.0C1451.0 319.2 1450.8 318.5 1453.8 315.0C1456.7 311.5 1457.5 311.3 1462.5 310.0C1467.5 308.7 1466.2 311.8 1475.0 309.5C1483.8 307.2 1490.1 303.7 1500.0 300.0C1509.9 296.3 1511.7 295.2 1517.5 293.8C1523.3 292.3 1522.1 288.8 1525.0 293.8C1527.9 298.7 1527.4 301.9 1530.0 315.0C1532.6 328.1 1534.8 340.6 1536.2 350.0C1537.7 359.4 1547.6 351.7 1536.2 355.5C1524.9 359.3 1500.0 362.9 1487.5 366.2C1475.0 369.6 1488.3 369.0 1482.5 370.0C1476.7 371.0 1469.2 373.4 1462.5 370.5C1455.8 367.6 1456.8 364.6 1453.8 357.5C1450.7 350.4 1450.4 347.6 1449.5 340.0C1448.6 332.4 1449.0 330.8 1450.0 325.0Z" fill="url(#g10)" />
<ellipse cx="1462.5" cy="340.0" rx="13.0" ry="30.0" transform="rotate(-5.0 1462.5 340.0)" fill="url(#g11)" />
<path d="M1531.2 285.0C1528.5 290.0 1520.7 291.5 1517.5 297.5C1514.3 303.5 1514.5 307.5 1515.5 315.0C1516.5 322.5 1518.6 328.0 1522.5 335.0C1526.4 342.0 1532.2 341.0 1535.0 350.0C1537.8 359.0 1523.2 374.0 1536.2 380.0C1549.2 386.0 1587.2 395.5 1600.0 380.0C1612.8 364.5 1600.2 323.0 1600.0 302.5C1599.8 282.0 1600.0 284.8 1598.8 277.5C1597.5 270.2 1597.5 270.0 1593.8 266.2C1590.0 262.5 1586.8 260.5 1580.0 258.8C1573.2 257.0 1568.0 257.0 1560.0 257.5C1552.0 258.0 1545.8 258.2 1540.0 261.2C1534.2 264.2 1533.0 267.8 1531.2 272.5C1529.5 277.2 1534.0 280.0 1531.2 285.0Z" fill="url(#g12)" />
<path d="M1531.2 285.0C1534.4 285.2 1542.7 285.2 1550.0 286.2C1557.3 287.3 1566.9 288.5 1575.0 291.2C1583.1 294.0 1594.8 300.6 1598.8 302.5" fill="none" stroke="#4a2400" stroke-width="1" stroke-dasharray="2 2" opacity=".8"/>
<path d="M1474.0 308.5C1474.6 312.1 1476.6 323.1 1477.5 330.0C1478.4 336.9 1478.5 343.3 1479.5 350.0C1480.5 356.7 1482.8 366.7 1483.5 370.0" fill="none" stroke="#3a1c00" stroke-width="1.100" stroke-dasharray="2.500 1.500" opacity=".8"/>
<path d="M1517.0 295.0C1516.7 298.3 1513.8 306.9 1515.0 314.7C1516.2 322.4 1520.7 334.9 1524.0 341.5C1527.3 348.1 1533.0 351.9 1534.8 354.0" fill="none" stroke="#3a1c00" stroke-width="1.200" opacity=".75"/>
<path d="M1536.6 379.0C1529.3 381.0 1536.5 393.1 1537.0 396.0C1537.5 398.9 1539.6 402.3 1541.0 404.0C1542.4 405.7 1546.8 409.4 1549.0 410.5C1551.2 411.6 1557.3 413.1 1560.0 413.5C1562.7 413.9 1569.2 413.8 1572.0 413.5C1574.8 413.2 1581.4 412.0 1584.0 411.0C1586.6 410.0 1592.3 406.8 1594.0 405.0C1595.7 403.2 1597.9 399.0 1598.5 396.0C1599.1 393.0 1606.4 381.0 1599.2 379.0C1592.0 377.0 1543.9 377.0 1536.6 379.0Z" fill="url(#g13)" />
<ellipse cx="1567.9" cy="379.0" rx="31.3" ry="11.6" transform="rotate(0.0 1567.9 379.0)" fill="#62c8be" />
<ellipse cx="1567.9" cy="381.5" rx="22.0" ry="7.0" transform="rotate(0.0 1567.9 381.5)" fill="#38aeb0" />
<ellipse cx="1567.9" cy="384.5" rx="15.0" ry="3.8" transform="rotate(0.0 1567.9 384.5)" fill="#8fdcc8" opacity=".75"/>
<path d="M1447.5 680.0C1447.5 675.5 1461.5 666.0 1470.0 660.0C1478.5 654.0 1482.0 652.0 1490.0 650.0C1498.0 648.0 1499.5 647.2 1510.0 650.0C1520.5 652.8 1528.5 661.4 1542.5 663.8C1556.5 666.1 1571.9 661.8 1580.0 662.0C1588.1 662.2 1586.0 659.3 1583.0 665.0C1580.0 670.7 1578.6 676.5 1565.0 690.5C1551.4 704.5 1525.2 728.1 1515.0 735.0C1504.8 741.9 1515.8 731.0 1513.8 725.0C1511.8 719.0 1509.8 712.0 1505.0 705.0C1500.2 698.0 1497.0 694.5 1490.0 690.0C1483.0 685.5 1478.5 684.5 1470.0 682.5C1461.5 680.5 1447.5 684.5 1447.5 680.0Z" fill="url(#g1)" />
<path d="M1145.0 837.5L1295.0 727.5L1320.0 731.0L1336.0 752.0L1338.0 784.0L1262.0 863.0L1235.0 856.0L1180.0 846.0Z" fill="url(#g14)" />
<path d="M1145.0 837.5L1295.0 727.5L1320.0 731.0L1336.0 752.0L1338.0 784.0L1262.0 863.0L1235.0 856.0L1180.0 846.0Z" fill="url(#g15)" />
<path d="M1295.0 727.0C1297.3 722.0 1307.0 714.9 1317.5 707.5C1328.0 700.1 1330.1 699.6 1340.0 695.5C1349.9 691.4 1349.5 690.9 1360.0 690.0C1370.5 689.1 1381.5 688.6 1385.0 691.5C1388.5 694.4 1379.5 695.9 1375.0 702.5C1370.5 709.1 1368.8 708.3 1365.5 720.0C1362.2 731.7 1361.3 736.8 1360.8 752.5C1360.2 768.2 1368.7 780.1 1363.0 787.5C1357.3 794.9 1342.2 791.2 1336.2 784.2C1330.3 777.2 1339.8 768.1 1337.5 757.5C1335.2 746.9 1333.2 745.5 1326.2 738.8C1319.2 732.0 1314.8 731.5 1307.5 728.8C1300.2 726.0 1292.7 732.0 1295.0 727.0Z" fill="url(#g16)" />
<path d="M1295.0 727.5C1296.2 726.0 1310.4 725.4 1320.0 731.2C1329.6 737.1 1332.3 740.1 1336.2 752.5C1340.2 764.9 1338.5 783.1 1337.0 784.2C1335.5 785.4 1335.1 768.4 1330.0 757.5C1324.9 746.6 1323.2 744.5 1315.0 737.5C1306.8 730.5 1293.8 729.0 1295.0 727.5Z" fill="#1c1c1c" />
<path d="M1385.0 692.0C1397.5 688.1 1421.5 684.8 1437.5 683.0C1453.5 681.2 1455.0 680.9 1465.0 683.0C1475.0 685.1 1480.2 688.4 1487.5 693.8C1494.8 699.1 1496.0 700.8 1501.2 710.0C1506.5 719.2 1512.5 725.0 1513.8 740.0C1515.0 755.0 1515.8 770.6 1507.5 785.0C1499.2 799.4 1486.0 807.4 1472.5 811.8C1459.0 816.1 1462.0 811.8 1440.0 807.0C1418.0 802.2 1378.3 798.9 1362.5 788.0C1346.7 777.1 1360.2 766.1 1360.8 752.5C1361.3 738.9 1362.7 730.0 1365.5 720.0C1368.3 710.0 1371.1 708.1 1375.0 702.5C1378.9 696.9 1372.5 695.9 1385.0 692.0Z" fill="url(#g17)" />
<path d="M1465.0 707.5C1474.9 705.9 1480.1 702.2 1490.0 705.8C1499.9 709.2 1502.1 711.6 1507.5 722.5C1512.9 733.4 1512.9 737.9 1513.0 752.5C1513.1 767.1 1512.8 772.8 1508.0 785.0C1503.2 797.2 1500.8 798.8 1492.5 805.0C1484.2 811.2 1482.4 811.0 1472.5 811.8C1462.6 812.5 1459.6 811.2 1450.0 808.0C1440.4 804.8 1438.0 805.7 1431.2 798.0C1424.5 790.3 1423.4 786.8 1421.2 775.0C1419.1 763.2 1419.4 759.2 1422.0 747.5C1424.6 735.8 1426.5 733.2 1432.5 725.0C1438.5 716.8 1439.9 716.6 1447.5 712.5C1455.1 708.4 1455.1 709.1 1465.0 707.5Z" fill="url(#g18)" />
<ellipse cx="1487.5" cy="759.5" rx="25.5" ry="52.0" transform="rotate(9.0 1487.5 759.5)" fill="url(#g19)" />
<path d="M1103.8 848.8C1108.5 839.2 1115.2 852.0 1122.5 850.0C1129.8 848.0 1132.5 841.0 1140.0 838.8C1147.5 836.5 1152.0 836.0 1160.0 838.8C1168.0 841.5 1174.0 845.8 1180.0 852.5C1186.0 859.2 1190.0 861.0 1190.0 872.5C1190.0 884.0 1181.8 894.0 1180.0 910.0C1178.2 926.0 1186.8 945.5 1181.2 952.5C1175.8 959.5 1168.0 948.5 1152.5 945.0C1137.0 941.5 1114.5 944.5 1103.8 935.0C1093.0 925.5 1098.8 914.8 1098.8 897.5C1098.8 880.2 1099.0 858.2 1103.8 848.8Z" fill="url(#g20)" />
<path d="M1087.5 846.2C1080.0 847.8 1078.2 849.1 1072.5 855.5C1066.8 861.9 1065.8 864.5 1063.0 873.8C1060.2 883.0 1060.0 885.4 1060.5 895.0C1061.0 904.6 1061.0 907.3 1065.0 915.0C1069.0 922.7 1068.8 923.2 1077.5 928.0C1086.2 932.8 1097.2 938.5 1102.5 935.5C1107.8 932.5 1101.0 923.9 1100.0 915.0C1099.0 906.1 1098.0 907.4 1098.0 897.5C1098.0 887.6 1098.5 883.9 1100.0 872.5C1101.5 861.1 1107.4 854.9 1104.5 848.8C1101.6 842.6 1095.0 844.7 1087.5 846.2Z" fill="url(#g21)" />
<path d="M1180.0 907.5C1166.0 919.4 1175.4 962.6 1181.2 976.2C1187.1 989.9 1201.4 989.5 1215.0 989.2C1228.6 989.0 1254.5 982.7 1263.0 974.5C1271.5 966.3 1265.9 951.6 1266.2 940.0C1266.6 928.4 1279.4 910.4 1265.0 905.0C1250.6 899.6 1194.0 895.6 1180.0 907.5Z" fill="url(#g22)" />
<path d="M1180.0 977.5C1187.5 972.6 1198.5 990.9 1215.0 990.5C1231.5 990.1 1251.5 977.6 1262.5 975.5C1273.5 973.4 1261.5 977.4 1270.0 980.0C1278.5 982.6 1295.0 985.2 1305.0 988.8C1315.0 992.2 1315.9 992.2 1320.0 997.5C1324.1 1002.8 1324.9 1006.5 1325.5 1015.0C1326.1 1023.5 1326.1 1030.0 1323.0 1040.0C1319.9 1050.0 1316.6 1057.8 1310.0 1065.0C1303.4 1072.2 1299.0 1075.2 1290.0 1075.8C1281.0 1076.3 1280.0 1072.0 1265.0 1068.0C1250.0 1064.0 1230.5 1059.6 1215.0 1055.5C1199.5 1051.4 1195.0 1055.6 1187.5 1047.5C1180.0 1039.4 1179.0 1029.0 1177.5 1015.0C1176.0 1001.0 1172.5 982.4 1180.0 977.5Z" fill="url(#g23)" />
<path d="M1181.2 976.2C1186.9 978.4 1201.4 989.5 1215.0 989.2C1228.6 989.0 1255.0 977.0 1263.0 974.5" fill="none" stroke="#0c0c0c" stroke-width="2.5"/>
<ellipse cx="1302.5" cy="1032.0" rx="22.0" ry="43.0" transform="rotate(14.0 1302.5 1032.0)" fill="url(#g24)" stroke="#181818" stroke-width="1"/>
<ellipse cx="1305.5" cy="1032.0" rx="13.0" ry="30.0" transform="rotate(14.0 1305.5 1032.0)" fill="#2b2b2b" stroke="#1c1c1c" stroke-width="1"/>
<path d="M1312.5 1018.8C1312.9 1020.6 1315.2 1026.0 1315.0 1030.0C1314.8 1034.0 1312.9 1039.6 1311.2 1042.5C1309.6 1045.4 1306.0 1046.7 1305.0 1047.5" fill="none" stroke="#3a3a3a" stroke-width="2.5"/>
<path d="M1176.2 961.2C1172.2 960.1 1167.5 965.4 1162.5 975.0C1157.5 984.6 1155.0 989.7 1155.0 1002.5C1155.0 1015.3 1154.9 1019.5 1162.5 1030.0C1170.1 1040.5 1183.4 1047.5 1187.5 1047.5C1191.6 1047.5 1182.6 1040.5 1180.0 1030.0C1177.4 1019.5 1176.2 1014.2 1176.2 1002.5C1176.2 990.8 1180.0 989.6 1180.0 980.0C1180.0 970.4 1180.3 962.4 1176.2 961.2Z" fill="url(#g25)" />
<path d="M1190.0 848.8C1198.5 845.7 1203.3 844.9 1215.0 844.5C1226.7 844.1 1230.1 844.0 1240.0 847.0C1249.9 850.0 1252.2 851.0 1257.5 857.5C1262.8 864.0 1260.9 864.5 1262.5 875.0C1264.1 885.5 1264.7 892.6 1264.2 902.5C1263.8 912.4 1265.0 912.1 1260.5 917.5C1256.0 922.9 1255.6 924.8 1245.0 925.5C1234.4 926.2 1227.2 924.0 1215.0 920.5C1202.8 917.0 1201.2 917.6 1192.5 910.5C1183.8 903.4 1182.2 898.9 1177.5 890.0C1172.8 881.1 1172.2 880.1 1172.5 872.5C1172.8 864.9 1174.7 863.0 1178.8 857.5C1182.8 852.0 1181.5 851.8 1190.0 848.8Z" fill="url(#g26)" />
<ellipse cx="1217.5" cy="858.0" rx="50.0" ry="27.0" transform="rotate(0.0 1217.5 858.0)" fill="url(#g27)" clip-path="url(#capC)"/>
<path d="M1568.7 389.0 m-84 0 a84 77 0 1 0 168 0 a84 77 0 1 0 -168 0 Z M1568.7 389.0 m-65 0 a65 58 0 1 1 130 0 a65 58 0 1 1 -130 0 Z" fill="url(#stripes)" fill-opacity=".8" fill-rule="evenodd" clip-path="url(#ringclip)"/>
<ellipse cx="1586.6" cy="350.5" rx="15.2" ry="15.2" transform="rotate(0.0 1586.6 350.5)" fill="url(#g28)" opacity=".82"/>
<ellipse cx="1549.0" cy="418.5" rx="10.5" ry="8.5" transform="rotate(0.0 1549.0 418.5)" fill="#1c1cd0" opacity=".85"/>
<g transform="rotate(-5.5 1568.7 383.0)"><path d="M1568.7 383.0 m-84.5 0 a84.5 27.5 0 1 0 169 0 a84.5 27.5 0 1 0 -169 0 Z M1568.7 383.0 m-66 0 a66 24.300 0 1 1 132 0 a66 24.300 0 1 1 -132 0 Z" fill="#dc1c1c" fill-opacity=".85" fill-rule="evenodd"/></g>
<path d="M1573.2 293.2L1583 334.4M1551.8 393.4L1558.9 446M1586.6 370L1575.9 446" stroke="#22cc33" stroke-width="2.200" fill="none"/>
<path d="M1450.7 380.9L1478.4 367.5L1478.4 373.7L1504.4 373.7L1504.4 387.0L1478.4 387.0L1478.4 393.4Z" fill="url(#g29)" />
<path d="M1684.0 386.2L1663.5 372.8L1663.5 379.0L1652.8 379.0L1652.8 393.0L1663.5 393.0L1663.5 399.6Z" fill="url(#g30)" />
<path d="M1561.6 446.0L1581.3 446.0L1581.3 471.2L1588.4 471.2L1572.5 500.0L1555.3 471.2L1561.6 471.2Z" fill="url(#g31)" />
</svg>
<!--STATUS-->
<div class="btn" style="left:4px;top:1262px;width:48px;height:21px;line-height:17.500px">Reset</div>
<div class="abs" style="left:61px;top:1265px;line-height:14px;font-size:11.27px;white-space:nowrap"><b>Left-Click:</b> Rotate. <b>Middle-Click:</b> Move X/Y. <b>Right-Click/Mouse Wheel:</b>: Zoom. <b>Shift</b>: More options.</div>
<div class="abs" style="left:2046px;top:1261px;line-height:14px;white-space:nowrap">6 fps</div>
<div class="abs" style="left:2086px;top:1272px;width:11px;height:11px;background:radial-gradient(circle,#c8c4bf 0.8px,transparent 1px) 0 0/3.500px 3.500px;clip-path:polygon(100% 0,100% 100%,0 100%)"></div>
<!-- collapse arrows -->
<svg class="abs" style="left:806px;top:668px" width="12" height="16"><path d="M10 2 L3.5 8 L10 14Z" fill="#2a2a2a"/></svg>
<svg class="abs" style="left:2084px;top:668px" width="12" height="16"><path d="M10 2 L3.5 8 L10 14Z" fill="#2a2a2a"/></svg>
</div></body></html>
